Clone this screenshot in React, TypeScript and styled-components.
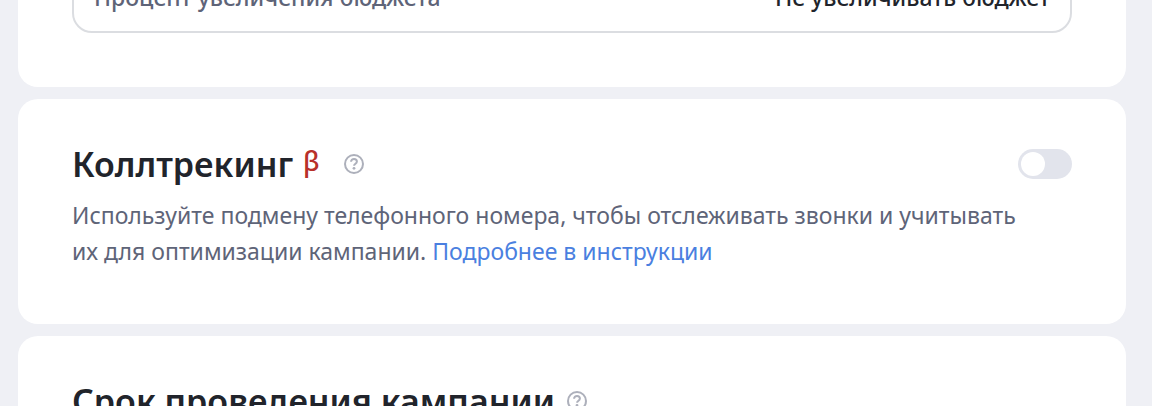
import React from 'react';
import styled, { createGlobalStyle } from 'styled-components';

const GlobalStyle = createGlobalStyle`
  *, *::before, *::after {
    box-sizing: border-box;
  }

  body {
    margin: 0;
    overflow-x: hidden;
    background: #eff0f5;
    color: #21242b;
    font-family: 'Noto Sans', 'Open Sans', sans-serif;
    font-size: 23px;
    font-weight: 400;
    line-height: 36px;
  }
`;

const Viewport = styled.div`
  height: 100vh;
  overflow: hidden;
`;

const Page = styled.main`
  display: flex;
  flex-direction: column;
  gap: 12px;
  margin-top: -94px;
  padding: 0 26px 0 18px;
`;

const Card = styled.section`
  display: flex;
  flex-direction: column;
  padding: 43px 54px 54px;
  border-radius: 20px;
  background: #fff;
`;

const Field = styled.button`
  display: flex;
  align-items: center;
  justify-content: space-between;
  width: 100%;
  padding: 16px 20px;
  margin-top: 12px;
  border: 2px solid #dbdde1;
  border-radius: 20px;
  background: #fff;
  color: inherit;
  font: inherit;
  font-weight: 500;
  text-align: left;
`;

const FieldLabel = styled.span`
  color: #5e6478;
`;

const Header = styled.header`
  display: flex;
  align-items: center;
  justify-content: space-between;
`;

const Heading = styled.div<{ $gap: number }>`
  display: flex;
  align-items: center;
  gap: ${({ $gap }) => $gap}px;
`;

const Title = styled.h2`
  display: flex;
  align-items: flex-start;
  gap: 10px;
  margin: 0;
  font-size: 34px;
  font-weight: 600;
  line-height: 44px;
`;

const Beta = styled.span`
  color: #b8302a;
  font-size: 27px;
  font-weight: 500;
  line-height: 38px;
`;

const HelpButton = styled.button`
  display: flex;
  padding: 0;
  border: 0;
  background: none;
  color: #adb0bb;
`;

const Switch = styled.input`
  appearance: none;
  width: 54px;
  height: 30px;
  margin: 0;
  padding: 3px;
  border-radius: 15px;
  background: #e2e4ec;

  &::before {
    content: '';
    display: block;
    width: 24px;
    height: 24px;
    border-radius: 50%;
    background: #fff;
  }

  &:checked {
    background: #4f80e2;
  }

  &:checked::before {
    margin-left: auto;
  }
`;

const Description = styled.p`
  max-width: 970px;
  margin: 11px 0 1px;
  color: #5e6478;
`;

const Link = styled.a`
  color: #4a7fe0;
  text-decoration: none;
`;

function Help({ label }: { label: string }) {
  return (
    <HelpButton type="button" aria-label={label}>
      <svg width="20" height="20" viewBox="0 0 20 20" fill="none" aria-hidden="true">
        <circle cx="10" cy="10" r="9" stroke="currentColor" strokeWidth="2" />
        <path
          d="M7.1 7.7C7.1 6.1 8.3 4.9 10 4.9s2.9 1 2.9 2.6c0 1.3-.8 1.9-1.6 2.4-.7.4-1.2.8-1.2 1.8"
          stroke="currentColor"
          strokeWidth="2"
        />
        <circle cx="10" cy="14.3" r="1.4" fill="currentColor" />
      </svg>
    </HelpButton>
  );
}

export default function App() {
  return (
    <Viewport>
      <GlobalStyle />
      <Page>
        <Card>
          <Field type="button">
            <FieldLabel>Процент увеличения бюджета</FieldLabel>
            <span>Не увеличивать бюджет</span>
          </Field>
        </Card>

        <Card>
          <Header>
            <Heading $gap={24}>
              <Title id="calltracking">
                Коллтрекинг
                <Beta>β</Beta>
              </Title>
              <Help label="О коллтрекинге" />
            </Heading>
            <Switch type="checkbox" role="switch" aria-labelledby="calltracking" />
          </Header>
          <Description>
            Используйте подмену телефонного номера, чтобы отслеживать звонки и учитывать их для
            оптимизации кампании. <Link href="#help">Подробнее в инструкции</Link>
          </Description>
        </Card>

        <Card>
          <Heading $gap={12}>
            <Title>Срок проведения кампании</Title>
            <Help label="О сроке проведения" />
          </Heading>
        </Card>
      </Page>
    </Viewport>
  );
}
